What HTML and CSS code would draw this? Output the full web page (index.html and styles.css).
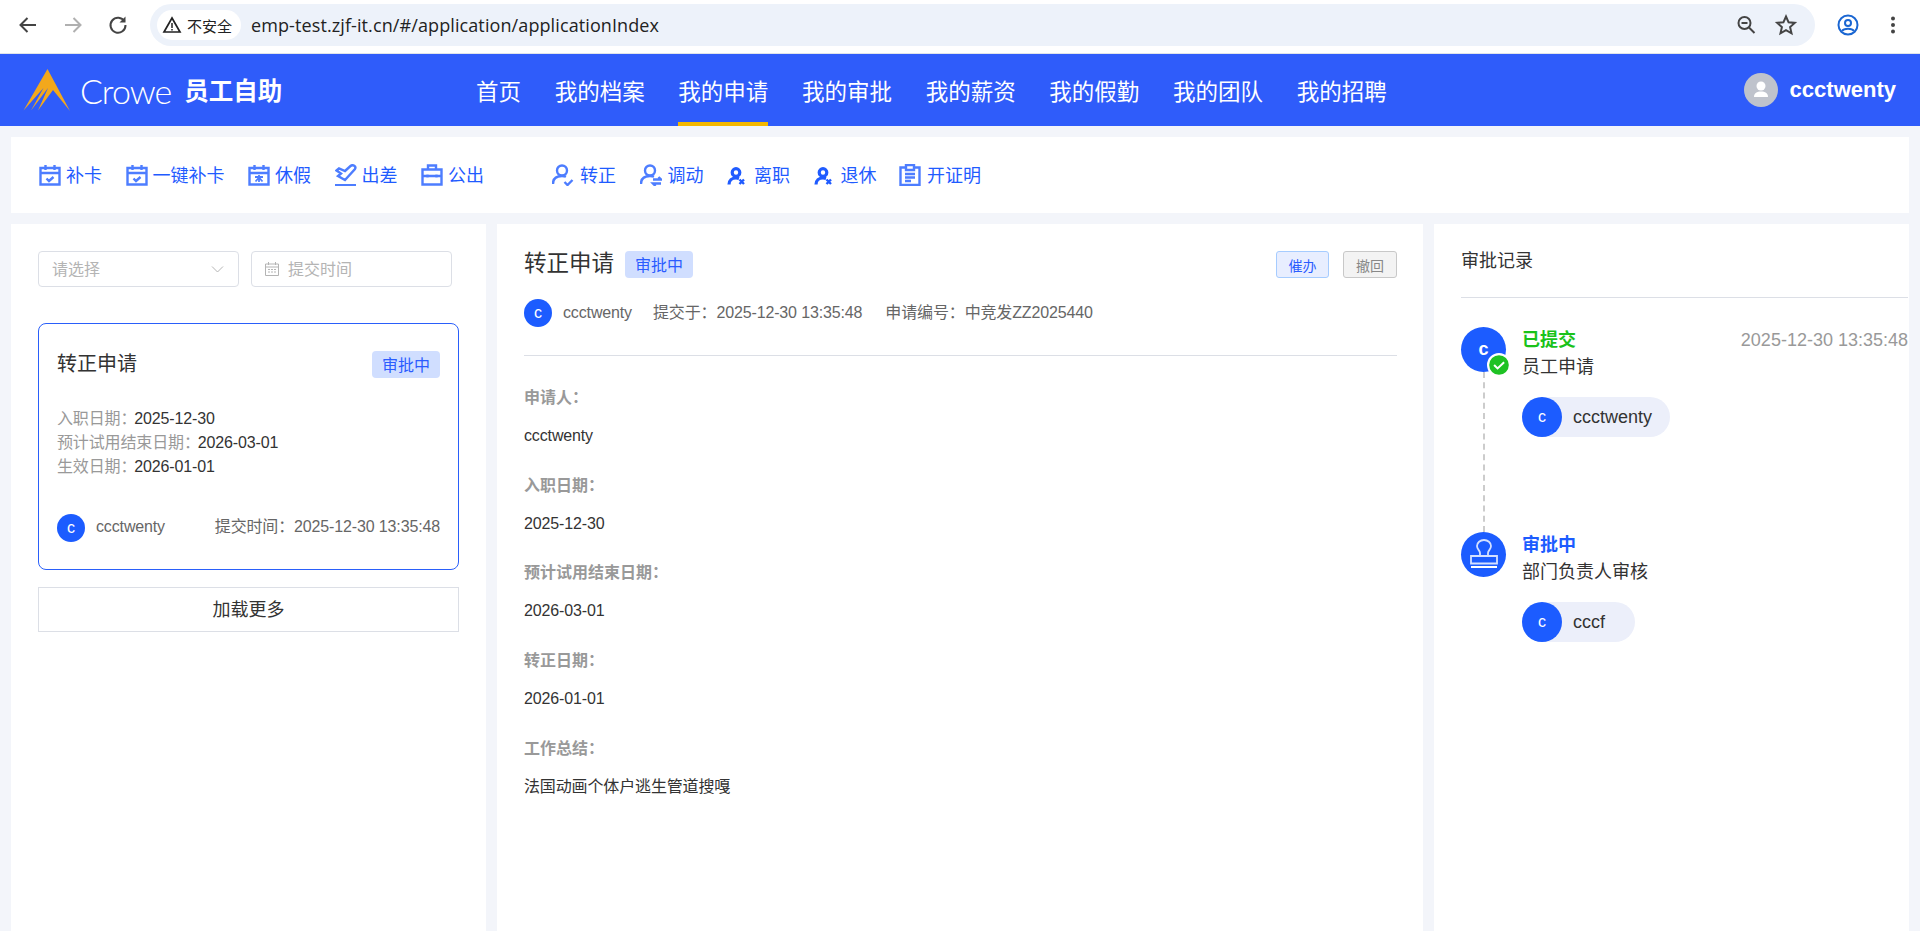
FILE: index.html
```html
<!DOCTYPE html>
<html lang="zh-CN">
<head>
<meta charset="utf-8">
<title>员工自助</title>
<link rel="stylesheet" href="styles.css">
</head>
<body>
<div class="chrome">
  <div class="navbtns">
    <svg class="cicon" viewBox="0 0 24 24"><path d="M20 12H5M11.500 5l-7 7 7 7" fill="none" stroke="#444" stroke-width="2"/></svg>
    <svg class="cicon" viewBox="0 0 24 24"><path d="M4 12h15M12.500 5l7 7-7 7" fill="none" stroke="#b0b0b0" stroke-width="2"/></svg>
    <svg class="cicon" viewBox="0 0 24 24"><path d="M18.500 8.500A7.500 7.500 0 1 0 19.500 12" fill="none" stroke="#444" stroke-width="2"/><path d="M19.500 3.500v6h-6z" fill="#444"/></svg>
  </div>
  <div class="omnibox">
    <div class="secure">
      <svg class="warn" viewBox="0 0 20 20"><path d="M10 3 18 17H2z" fill="none" stroke="#222" stroke-width="1.700"/><path d="M10 8v5M10 14v1.600" stroke="#222" stroke-width="1.500"/></svg>
      <span>不安全</span>
    </div>
    <span class="url">emp-test.zjf-it.cn/#/application/applicationIndex</span>
    <div class="omni-right">
      <svg class="cicon" viewBox="0 0 24 24"><circle cx="10.500" cy="10" r="6" fill="none" stroke="#444" stroke-width="2"/><path d="M15 14.500l5.500 5.500" stroke="#444" stroke-width="2"/><path d="M7.500 10h6" stroke="#444" stroke-width="2"/></svg>
      <svg class="cicon" viewBox="0 0 24 24"><path d="M12 3.500l2.600 5.800 6.200.6-4.700 4.200 1.400 6.200-5.500-3.200-5.500 3.200 1.400-6.200-4.700-4.200 6.200-.6z" fill="none" stroke="#444" stroke-width="2"/></svg>
    </div>
  </div>
  <div class="chrome-right">
    <svg class="cicon" viewBox="0 0 24 24"><circle cx="12" cy="12" r="9.500" fill="none" stroke="#1a66d2" stroke-width="2"/><circle cx="12" cy="10" r="3" fill="none" stroke="#1a66d2" stroke-width="2"/><path d="M6 18c2-3 10-3 12 0" fill="none" stroke="#1a66d2" stroke-width="2"/></svg>
    <svg class="cicon" viewBox="0 0 24 24"><circle cx="12" cy="5.500" r="2" fill="#444"/><circle cx="12" cy="12" r="2" fill="#444"/><circle cx="12" cy="18.500" r="2" fill="#444"/></svg>
  </div>
</div>

<header class="topbar">
  <div class="brand">
    <svg class="logo" viewBox="0 0 47 42"><path d="M24.500 0 47 42 30 21 15 41.500 25 19 8 41.500 20.500 19 .5 41.500z" fill="#f3a81c"/></svg>
    <span class="crowe">Crowe</span>
    <span class="brand-cn">员工自助</span>
  </div>
  <nav class="mainnav">
    <a class="navitem">首页</a>
    <a class="navitem">我的档案</a>
    <a class="navitem active">我的申请</a>
    <a class="navitem">我的审批</a>
    <a class="navitem">我的薪资</a>
    <a class="navitem">我的假勤</a>
    <a class="navitem">我的团队</a>
    <a class="navitem">我的招聘</a>
  </nav>
  <div class="user">
    <span class="user-avatar">
      <svg viewBox="0 0 34 34" width="34" height="34"><circle cx="17" cy="13" r="4.500" fill="#fff"/><path d="M10 24c0-4 3-5.500 7-5.500s7 1.500 7 5.500z" fill="#fff"/></svg>
    </span>
    <span class="user-name">ccctwenty</span>
  </div>
</header>

<main class="page">
  <section class="toolbar">
    <div class="toolgroup">
      <a class="tool"><svg class="ticon" viewBox="0 0 22 22"><path d="M1.500 4h19v16.500h-19zM1.500 9h19M6.500 1v5M15.500 1v5" class="ts"/><path d="M7.500 14.500l2.500 2.500 4.500-4" class="ts"/></svg><span class="tl">补卡</span></a>
      <a class="tool"><svg class="ticon" viewBox="0 0 22 22"><path d="M1.500 4h19v16.500h-19zM1.500 9h19M6.500 1v5M15.500 1v5" class="ts"/><path d="M7.500 14.500l2.500 2.500 4.500-4" class="ts"/></svg><span class="tl">一键补卡</span></a>
      <a class="tool"><svg class="ticon" viewBox="0 0 22 22"><path d="M1.500 4h19v16.500h-19zM1.500 9h19M6.500 1v5M15.500 1v5" class="ts"/><path d="M7 13h8M11 11v7M11 13.500l-3.500 4M11 13.500l3.500 4" class="tt"/></svg><span class="tl">休假</span></a>
      <a class="tool"><svg class="ticon" viewBox="0 0 22 22"><path d="M0 21.200h21" class="ts"/><path d="M1.500 6.500 4 4.500l6 2.500 5.500-5c2.500-2 6 .5 4.500 3L10 16 3 12l3-2.500z" class="ts"/></svg><span class="tl">出差</span></a>
      <a class="tool"><svg class="ticon" viewBox="0 0 22 22"><path d="M1.500 5.500h19v15h-19zM7 5.500V1.500h8v4M1.500 12h19M6.500 10.500v3M15.500 10.500v3" class="ts"/></svg><span class="tl">公出</span></a>
    </div>
    <div class="toolgroup wide">
      <a class="tool"><svg class="ticon" viewBox="0 0 22 22"><circle cx="10" cy="6.500" r="5" class="ts"/><path d="M1 20c0-5 3-8 9-8 1.500 0 3 .3 4 .8" class="ts"/><path d="M12.500 18l3 3 5-5" class="ts"/></svg><span class="tl">转正</span></a>
      <a class="tool"><svg class="ticon" viewBox="0 0 22 22"><circle cx="10" cy="6.500" r="5" class="ts"/><path d="M1 20c0-5 3-8 9-8 1.500 0 3 .3 4 .8" class="ts"/><path d="M13 15.500h8l-2.500-2.500M21 19.500h-8l2.500 2.500" class="ts"/></svg><span class="tl">调动</span></a>
      <a class="tool"><svg class="ticon narrow" viewBox="0 0 18 22"><circle cx="9" cy="8.500" r="3.800" fill="none" stroke="#1f5bff" stroke-width="3.200"/><path d="M2 20.500c0-4 3-6.500 7-6.500 1 0 2 .2 3 .5" fill="none" stroke="#1f5bff" stroke-width="3.200"/><path d="M12.500 15.500l4.500 4.500M17 15.500l-4.500 4.500" stroke="#1f5bff" stroke-width="2.400"/></svg><span class="tl">离职</span></a>
      <a class="tool"><svg class="ticon narrow" viewBox="0 0 18 22"><circle cx="9" cy="8.500" r="3.800" fill="none" stroke="#1f5bff" stroke-width="3.200"/><path d="M2 20.500c0-4 3-6.500 7-6.500 1 0 2 .2 3 .5" fill="none" stroke="#1f5bff" stroke-width="3.200"/><path d="M12.500 15.500l4.500 4.500M17 15.500l-4.500 4.500" stroke="#1f5bff" stroke-width="2.400"/></svg><span class="tl">退休</span></a>
      <a class="tool proof"><svg class="ticon" viewBox="0 0 22 22"><path d="M7 3.500H1.500v17.500h19V3.500H15M7 1h8v5H7zM6 10h10M6 13.500h10M6 17h6" class="ts"/></svg><span class="tl">开证明</span></a>
    </div>
  </section>

  <section class="panels">
    <aside class="panel panel-list">
      <div class="filters">
        <div class="field-box"><span class="ph">请选择</span>
          <svg class="chev" viewBox="0 0 12 7"><path d="M.5.500 6 6 11.500.5" fill="none" stroke="#b4b4b4"/></svg>
        </div>
        <div class="field-box date">
          <svg class="cal" viewBox="0 0 14 14"><path d="M.5 2h13v11.500H.5zM.5 5h13M3.500 0v3M10.500 0v3M3 7.500h2M6 7.500h2M9 7.500h2M3 10h2M6 10h2M9 10h2" fill="none" stroke="#b4b4b4"/></svg>
          <span class="ph">提交时间</span>
        </div>
      </div>
      <article class="card">
        <div class="card-head"><span class="card-title">转正申请</span><span class="badge">审批中</span></div>
        <div class="card-rows">
          <div><span class="k">入职日期：</span>2025-12-30</div>
          <div><span class="k">预计试用结束日期：</span>2026-03-01</div>
          <div><span class="k">生效日期：</span>2026-01-01</div>
        </div>
        <div class="card-foot">
          <span class="av">c</span><span class="who">ccctwenty</span>
          <span class="when">提交时间：2025-12-30 13:35:48</span>
        </div>
      </article>
      <button class="more">加载更多</button>
    </aside>

    <section class="panel panel-detail">
      <div class="detail-head">
        <h1 class="detail-title">转正申请</h1><span class="badge">审批中</span>
        <div class="actions"><span class="act urge">催办</span><span class="act undo">撤回</span></div>
      </div>
      <div class="meta">
        <span class="av">c</span><span class="who">ccctwenty</span>
        <span class="m1">提交于：2025-12-30 13:35:48</span>
        <span class="m2">申请编号：中竞发ZZ2025440</span>
      </div>
      <div class="fields">
        <div class="fld"><div class="fl">申请人：</div><div class="fv">ccctwenty</div></div>
        <div class="fld"><div class="fl">入职日期：</div><div class="fv">2025-12-30</div></div>
        <div class="fld"><div class="fl">预计试用结束日期：</div><div class="fv">2026-03-01</div></div>
        <div class="fld"><div class="fl">转正日期：</div><div class="fv">2026-01-01</div></div>
        <div class="fld"><div class="fl">工作总结：</div><div class="fv">法国动画个体户逃生管道搜嘎</div></div>
      </div>
    </section>

    <aside class="panel panel-flow">
      <div class="flow-title">审批记录</div>
      <div class="steps">
        <div class="step first">
          <div class="node"><span class="dot">c</span>
            <svg class="okmark" viewBox="0 0 22 22"><circle cx="11" cy="11" r="10" fill="#1fc224" stroke="#fff" stroke-width="2"/><path d="M6.500 11l3.200 3.200 6-5.700" fill="none" stroke="#fff" stroke-width="1.800"/></svg>
          </div>
          <div class="step-body">
            <div class="step-top"><span class="st green">已提交</span><span class="time">2025-12-30 13:35:48</span></div>
            <div class="sub">员工申请</div>
            <div class="pill"><span class="pav">c</span><span class="pname">ccctwenty</span></div>
          </div>
        </div>
        <div class="step">
          <div class="node"><span class="dot">
            <svg viewBox="0 0 45 45" width="45" height="45"><path d="M19 24v-3c0-2.500-3-3.500-3-7a7 6 0 0 1 14 0c0 3.500-3 4.500-3 7v3zM10 24h26v7.500H10z" fill="none" stroke="#d4e0ff" stroke-width="1.800"/><path d="M10 35h26" stroke="#fff" stroke-width="2"/></svg>
          </span></div>
          <div class="step-body">
            <div class="step-top"><span class="st blue">审批中</span></div>
            <div class="sub">部门负责人审核</div>
            <div class="pill"><span class="pav">c</span><span class="pname">cccf</span></div>
          </div>
        </div>
      </div>
    </aside>
  </section>
</main>
</body>
</html>
```
FILE: styles.css
```css
* { box-sizing: border-box; }
html, body { margin: 0; height: 931px; overflow: hidden; }
body {
  display: flex;
  flex-direction: column;
  background: #f3f5fa;
  font-family: "Liberation Sans", "Noto Sans CJK SC", sans-serif;
  font-size: 16px;
  color: #333;
}

/* browser chrome */
.chrome { height: 54px; background: #fff; display: flex; align-items: center; flex: none; border-bottom: 1px solid #dfe3ea; padding-bottom: 3px; }
.cicon { width: 24px; height: 24px; display: block; }
.navbtns { display: flex; gap: 21px; padding-left: 16px; width: 150px; }
.omnibox { width: 1665px; height: 42px; border-radius: 21px; background: #edf2fa; display: flex; align-items: center; padding-left: 7px; }
.secure { width: 84px; height: 30px; border-radius: 15px; background: #fff; display: flex; align-items: center; gap: 5px; padding-left: 5px; font-size: 15px; color: #222; }
.warn { width: 20px; height: 20px; }
.url { margin-left: 10px; font-family: "Open Sans", sans-serif; font-size: 18px; letter-spacing: .1px; color: #222; }
.omni-right { margin-left: auto; display: flex; gap: 16px; padding-right: 17px; }
.chrome-right { display: flex; gap: 21px; margin-left: 21px; }

/* header */
.topbar { height: 72px; flex: none; background: #2f5cfa; display: flex; align-items: center; position: relative; color: #fff; }
.brand { display: flex; align-items: center; width: 476px; padding-left: 23px; }
.logo { width: 47px; height: 42px; flex: none; }
.crowe { font-family: "Lato", sans-serif; font-weight: 300; font-size: 34px; margin-left: 10px; letter-spacing: -1px; }
.brand-cn { font-size: 24.500px; font-weight: 700; margin-left: 13px; padding-bottom: 2px; }
.mainnav { display: flex; gap: 33.670px; height: 100%; }
.navitem { font-size: 22.500px; display: flex; align-items: center; height: 100%; border-bottom: 4px solid transparent; border-top: 4px solid transparent; }
.navitem.active { border-bottom-color: #f5b800; }
.user { margin-left: auto; display: flex; align-items: center; gap: 12px; padding-right: 24px; }
.user-avatar { width: 34px; height: 34px; border-radius: 50%; background: #bfc3cc; display: block; }
.user-avatar svg { display: block; }
.user-name { font-size: 22px; font-weight: 700; }

/* page */
.page { flex: 1; padding: 11px 11px 0; display: flex; flex-direction: column; gap: 11px; min-height: 0; }
.toolbar { height: 76px; background: #fff; flex: none; display: flex; align-items: center; padding-left: 28px; gap: 68px; }
.toolgroup { display: flex; gap: 23.500px; }
.tool { display: flex; align-items: center; gap: 5px; font-size: 18px; color: #1f5bff; }
.toolgroup.wide .tool { gap: 6px; }
.toolgroup.wide .tool.proof { margin-left: -1px; }
.tl { padding-bottom: 2px; }
.ticon { width: 22px; height: 22px; flex: none; }
.ticon.narrow { width: 18px; margin-right: 3px; }
.ts { fill: none; stroke: #4d7dff; stroke-width: 2.400; }
.tt { fill: none; stroke: #4d7dff; stroke-width: 1.800; }

.panels { flex: 1; display: grid; grid-template-columns: 475px 926px 475px; gap: 11px; min-height: 0; }
.panel { background: #fff; min-height: 0; }

/* list */
.panel-list { padding: 27px 27px 0; }
.filters { display: flex; gap: 12px; }
.field-box { width: 201px; height: 36px; border: 1px solid #dcdfe6; border-radius: 4px; display: flex; align-items: center; padding: 0 13px; position: relative; }
.ph { color: #b4b4b4; padding-bottom: 2px; }
.chev { width: 13px; height: 7px; margin-left: auto; margin-right: 1px; }
.cal { width: 14px; height: 14px; margin-right: 9px; }
.card { margin-top: 36px; height: 247px; border: 1px solid #2a5ffa; border-radius: 8px; padding: 27px 18px 0; }
.card-head { display: flex; align-items: center; justify-content: space-between; height: 27px; }
.card-title { font-size: 20px; line-height: 24px; color: #333; padding-bottom: 1px; }
.badge { display: inline-flex; align-items: center; justify-content: center; width: 68px; height: 27px; background: #d0deff; color: #2b5cff; border-radius: 4px; font-size: 16px; padding-bottom: 2px; }
.card-rows { margin-top: 29px; line-height: 24px; color: #333; letter-spacing: -.14px; }
.k { color: #999; margin-right: -2px; }
.card-foot { display: flex; align-items: center; margin-top: 35px; line-height: 24px; color: #666; letter-spacing: -.14px; }
.av { width: 28px; height: 28px; border-radius: 50%; background: #1c5cff; color: #fff; display: inline-flex; align-items: center; justify-content: center; font-size: 16px; flex: none; }
.who { margin-left: 11px; color: #666; padding-bottom: 2px; }
.when { margin-left: auto; padding-bottom: 2px; }
.more { display: block; width: 421px; height: 45px; margin-top: 17px; background: #fff; border: 1px solid #dcdfe6; font: inherit; font-size: 18px; color: #333; padding: 0 0 3px; }

/* detail */
.panel-detail { padding: 27px 26px 0 27px; }
.detail-head { display: flex; align-items: center; height: 27px; }
.detail-title { margin: 0 11px 0 0; font-size: 22.500px; line-height: 28px; font-weight: 400; color: #333; padding-bottom: 1px; }
.actions { margin-left: auto; display: flex; gap: 14px; }
.act { width: 53px; height: 27px; border-radius: 3px; font-size: 14px; display: flex; align-items: center; justify-content: center; border: 1px solid; }
.urge { background: #e8eeff; border-color: #a6ccff; color: #2b5cff; }
.undo { width: 54px; background: #f3f3f3; border-color: #c8c8c8; color: #888; }
.meta { display: flex; align-items: center; margin-top: 21px; height: 28px; line-height: 24px; color: #666; letter-spacing: -.14px; }
.meta .who { padding-bottom: 0; }
.m1 { margin-left: 21px; }
.m2 { margin-left: 23px; }
.fields { margin-top: 28px; border-top: 1px solid #dcdfe6; padding-top: 30px; }
.fld { height: 87.700px; }
.fl { line-height: 24px; font-weight: 700; color: #999; }
.fv { line-height: 24px; margin-top: 14px; color: #333; letter-spacing: -.14px; }

/* flow */
.panel-flow { padding: 0 1px 0 27px; }
.flow-title { height: 74px; line-height: 74px; font-size: 18px; border-bottom: 1px solid #dcdfe6; color: #333; }
.steps { padding-top: 29px; position: relative; }
.step { display: flex; gap: 16px; height: 205px; position: relative; }
.step.first::after { content: ""; position: absolute; left: 22px; top: 45px; height: 160px; border-left: 2px dashed #ccc; }
.node { width: 45px; height: 45px; position: relative; flex: none; }
.dot { width: 45px; height: 45px; border-radius: 50%; background: #1c5cff; color: #fff; font-weight: 700; font-size: 18px; display: flex; align-items: center; justify-content: center; }
.dot svg { display: block; }
.okmark { position: absolute; width: 24px; height: 24px; left: 26px; top: 26px; }
.step-body { flex: 1; }
.step-top { display: flex; justify-content: space-between; line-height: 27px; font-size: 18px; font-weight: 700; }
.green { color: #1ac21a; }
.blue { color: #1c5cff; }
.time { color: #999; font-weight: 400; }
.sub { font-size: 18px; line-height: 27px; color: #333; }
.pill { display: inline-flex; align-items: center; min-width: 113px; margin-top: 16px; height: 40px; border-radius: 20px; background: #eceffa; padding-right: 18px; }
.pav { width: 40px; height: 40px; border-radius: 50%; background: #1c5cff; color: #fff; display: flex; align-items: center; justify-content: center; font-size: 16px; }
.pname { margin-left: 11px; font-size: 18px; color: #333; }
```
